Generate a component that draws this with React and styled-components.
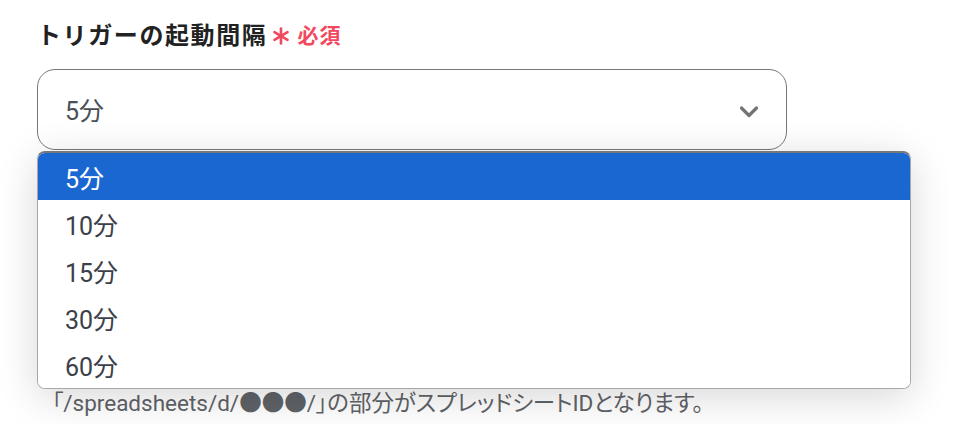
import React, { useState } from 'react';
import styled, { createGlobalStyle } from 'styled-components';

const GlobalStyle = createGlobalStyle`
  body {
    margin: 0;
    background: #fff;
    font-family: Roboto, "Noto Sans CJK JP", sans-serif;
  }
`;

const options = ['5分', '10分', '15分', '30分', '60分'];

const App = () => {
  const [value, setValue] = useState('5分');

  return (
    <>
      <GlobalStyle />
      <Page>
        <Label>
          トリガーの起動間隔
          <Required>
            <Star viewBox="0 0 18 18" width="18" height="18">
              <g stroke="#f2485d" strokeWidth="2.6" strokeLinecap="round">
                <path d="M9 1.5 V16.5" />
                <path d="M2.5 5.2 L15.5 12.8" />
                <path d="M2.5 12.8 L15.5 5.2" />
              </g>
            </Star>
            必須
          </Required>
        </Label>
        <Field>
          <SelectBox>
            <Value>{value}</Value>
            <Chevron viewBox="0 0 20 14" width="20" height="14">
              <path d="M2.5 3 L10 10.5 L17.5 3" fill="none" stroke="#737373" strokeWidth="3.2" strokeLinecap="round" strokeLinejoin="round" />
            </Chevron>
          </SelectBox>
          <Menu>
            {options.map((o) => (
              <Option key={o} $active={o === value} onClick={() => setValue(o)}>
                {o}
              </Option>
            ))}
          </Menu>
        </Field>
        <Hint>「/spreadsheets/d/●●●/」の部分がスプレッドシートIDとなります。</Hint>
      </Page>
    </>
  );
};

export default App;

const Page = styled.div`
  padding: 18px 37px 0;
  width: 954px;
  height: 424px;
  box-sizing: border-box;
  overflow: hidden;
`;

const Label = styled.div`
  display: flex;
  align-items: center;
  font-size: 24px;
  font-weight: 700;
  color: #222;
  letter-spacing: 1.6px;
  line-height: 32px;
  font-family: "Noto Sans CJK JP", sans-serif;
`;

const Required = styled.span`
  display: flex;
  align-items: center;
  margin-left: 5px;
  font-size: 21px;
  font-weight: 700;
  color: #f2485d;
  letter-spacing: 1px;
`;

const Star = styled.svg`
  display: block;
  margin-right: 7px;
  margin-top: 4px;
`;

const Field = styled.div`
  position: relative;
  margin-top: 19px;
`;

const SelectBox = styled.div`
  width: 750px;
  height: 81px;
  box-sizing: border-box;
  border: 1px solid #777;
  border-radius: 18px;
  display: flex;
  align-items: center;
  justify-content: space-between;
  padding: 0 27px 0 27px;
`;

const Value = styled.span`
  font-size: 25px;
  color: #4a5058;
  margin-top: -2px;
`;

const Chevron = styled.svg`
  display: block;
  margin-top: 4px;
`;

const Menu = styled.div`
  position: absolute;
  left: 0;
  top: 82px;
  width: 874px;
  box-sizing: border-box;
  background: #fff;
  border: 1px solid #a8a8a8;
  border-top: 2px solid #777;
  border-radius: 8px;
  overflow: hidden;
  box-shadow: 0 8px 40px rgba(0, 0, 0, 0.16);
`;

const Option = styled.div`
  height: 47px;
  display: flex;
  align-items: center;
  padding-left: 27px;
  font-size: 25px;
  color: ${(p) => (p.$active ? '#fff' : '#3c4048')};
  background: ${(p) => (p.$active ? '#1a67d2' : '#fff')};
  cursor: pointer;
`;

const Hint = styled.div`
  margin-top: 239px;
  padding-left: 15px;
  font-size: 22.5px;
  line-height: 28px;
  color: #5f6368;
  font-feature-settings: "palt";
  white-space: nowrap;
`;
